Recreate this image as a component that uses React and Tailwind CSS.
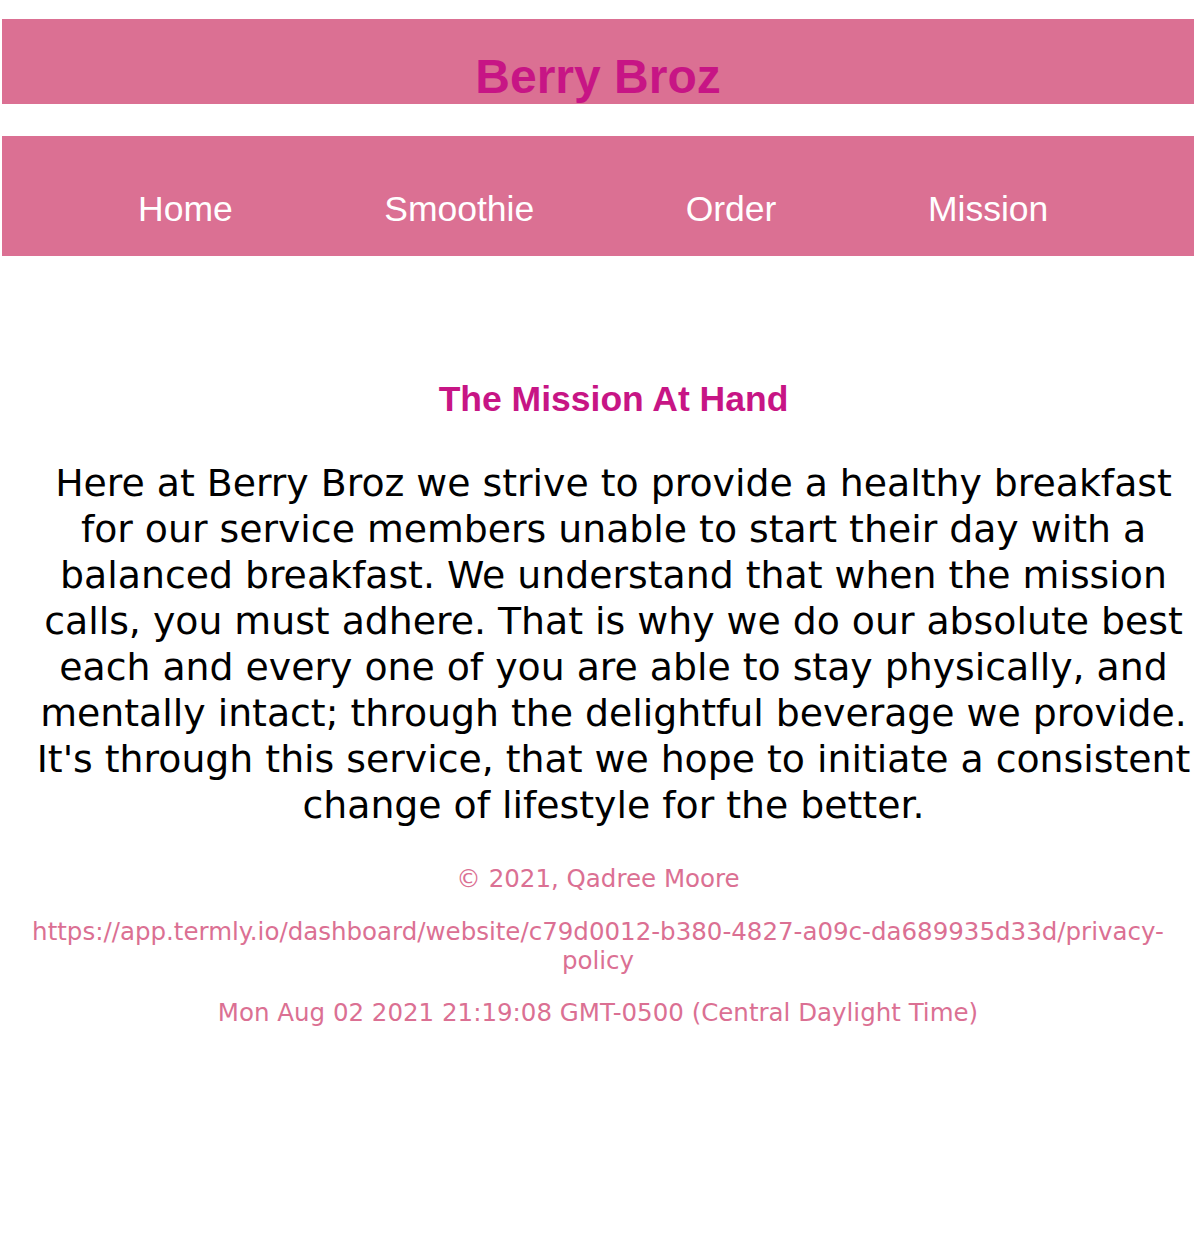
import React from "react";

const navLinks = ["Home", "Smoothie", "Order", "Mission"];

const missionLines = [
  "Here at Berry Broz we strive to provide a healthy breakfast",
  "for our service members unable to start their day with a",
  "balanced breakfast. We understand that when the mission",
  "calls, you must adhere. That is why we do our absolute best",
  "each and every one of you are able to stay physically, and",
  "mentally intact; through the delightful beverage we provide.",
  "It's through this service, that we hope to initiate a consistent",
  "change of lifestyle for the better.",
];

const App = () => {
  return (
    <div className="min-h-screen bg-white pt-[19px]">
      {/* Banner */}
      <header className="mx-[2px] h-[85px] w-[1192px] bg-[#db7093] pt-[30px] text-center">
        <h1 className="font-['Liberation_Sans',Arial,sans-serif] text-[48px] font-bold leading-[55px] text-[#c71585]">
          Berry Broz
        </h1>
      </header>

      {/* Nav */}
      <nav className="mx-[2px] mt-[32px] flex h-[120px] w-[1192px] gap-[151.5px] bg-[#db7093] pl-[136px] pt-[53px]">
        {navLinks.map((link) => (
          <a
            key={link}
            href="#"
            className="font-['Liberation_Sans',Arial,sans-serif] text-[35.5px] leading-[40px] text-white"
          >
            {link}
          </a>
        ))}
      </nav>

      {/* Mission */}
      <main className="ml-[29px] w-[1169px] text-center">
        <h2 className="mt-[123px] font-['Liberation_Sans',Arial,sans-serif] text-[35.5px] font-bold leading-[41px] text-[#c71585]">
          The Mission At Hand
        </h2>
        <p className="mt-[40px] font-['DejaVu_Sans',Verdana,sans-serif] text-[37.8px] leading-[46px] text-black">
          {missionLines.map((line) => (
            <span key={line} className="block whitespace-nowrap">
              {line}
            </span>
          ))}
        </p>
      </main>

      {/* Footer */}
      <footer className="mx-[2px] mt-[36px] w-[1192px] text-center font-['DejaVu_Sans',Verdana,sans-serif] text-[24.5px] leading-[29px] text-[#db7093]">
        <p>© 2021, Qadree Moore</p>
        <p className="mt-[23.5px]">
          <span className="block whitespace-nowrap">
            https://app.termly.io/dashboard/website/c79d0012-b380-4827-a09c-da689935d33d/privacy-
          </span>
          <span className="block">policy</span>
        </p>
        <p className="mt-[23px]">Mon Aug 02 2021 21:19:08 GMT-0500 (Central Daylight Time)</p>
      </footer>
    </div>
  );
};

export default App;
